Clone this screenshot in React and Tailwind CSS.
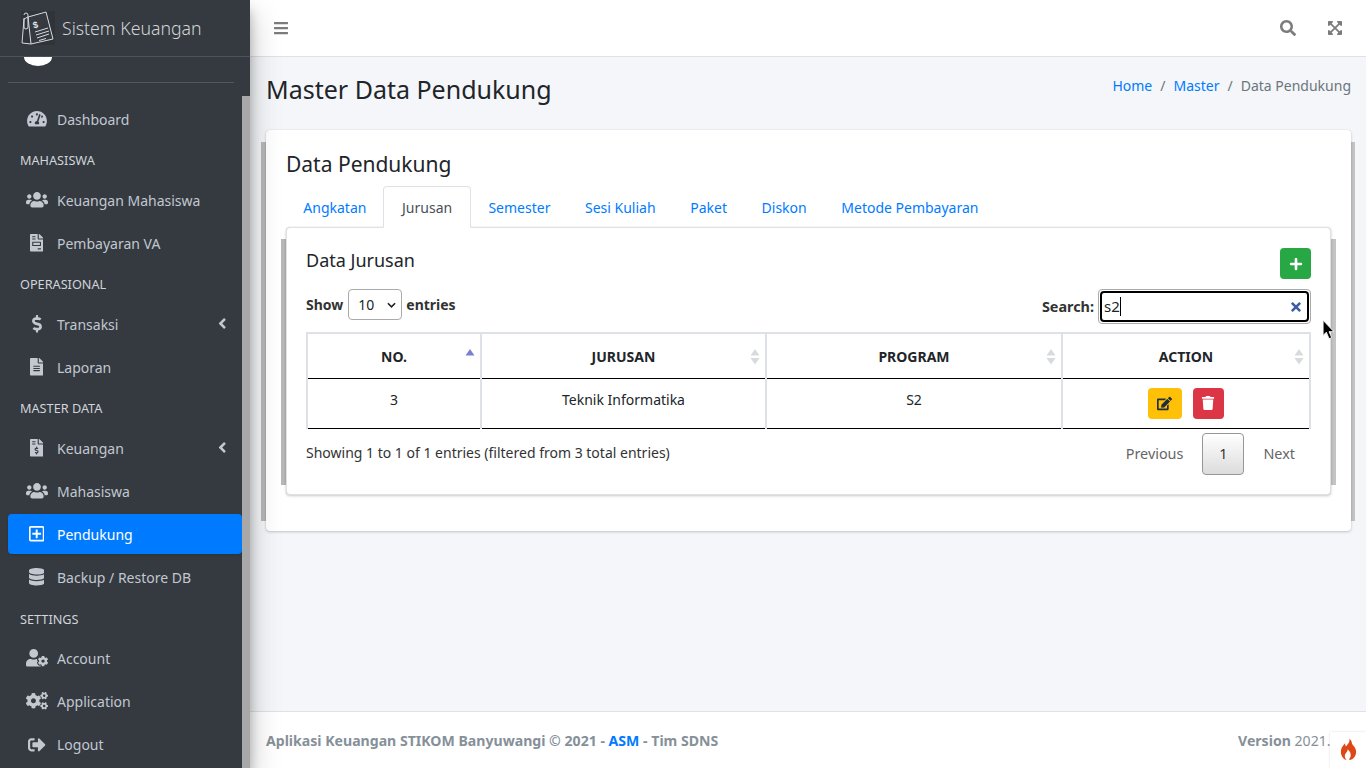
import { FaTachometerAlt, FaUsers, FaFileInvoice, FaDollarSign, FaFileAlt, FaFileInvoiceDollar, FaRegPlusSquare, FaDatabase, FaUserCog, FaCogs, FaSignOutAlt, FaBars, FaSearch, FaExpandArrowsAlt, FaAngleLeft, FaEdit, FaTrash, FaPlus, FaTimes } from 'react-icons/fa';

const font = { fontFamily: '"Noto Sans", sans-serif' };

const menu = [
  { icon: FaTachometerAlt, size: 'w-[20px]', label: 'Dashboard' },
  { header: 'MAHASISWA' },
  { icon: FaUsers, size: 'w-[22px]', label: 'Keuangan Mahasiswa' },
  { icon: FaFileInvoice, size: 'w-[13.2px]', label: 'Pembayaran VA' },
  { header: 'OPERASIONAL' },
  { icon: FaDollarSign, size: 'w-[10px]', label: 'Transaksi', arrow: true },
  { icon: FaFileAlt, size: 'w-[13.2px]', label: 'Laporan' },
  { header: 'MASTER DATA' },
  { icon: FaFileInvoiceDollar, size: 'w-[13.2px]', label: 'Keuangan', arrow: true },
  { icon: FaUsers, size: 'w-[22px]', label: 'Mahasiswa' },
  { icon: FaRegPlusSquare, size: 'w-[15.4px]', label: 'Pendukung', active: true },
  { icon: FaDatabase, size: 'w-[15.4px]', label: 'Backup / Restore DB' },
  { header: 'SETTINGS' },
  { icon: FaUserCog, size: 'w-[22px]', label: 'Account' },
  { icon: FaCogs, size: 'w-[22px]', label: 'Application' },
  { icon: FaSignOutAlt, size: 'w-[17.6px]', label: 'Logout' },
];

const tabs = ['Angkatan', 'Jurusan', 'Semester', 'Sesi Kuliah', 'Paket', 'Diskon', 'Metode Pembayaran'];

function Logo() {
  return (
    <svg viewBox="0 0 34 34" className="w-[34px] h-[34px] shrink-0" fill="none" stroke="#d8dadc" strokeWidth="1">
      <rect x="0" y="0" width="34" height="34" fill="#2f343a" stroke="none" />
      <path d="M7 6 L25 1 L32 28 L10 33 Z" fill="#343a40" />
      <path d="M7 6 L3 8 L1 32 L10 33" />
      <path d="M3 4 a2 2 0 0 1 4 0 L7 16 a2 2 0 0 1 -4 0 L3 7" />
      <path d="M14 21 L27 17 M15 24 L28 20 M16 27 L28 23 M18 29.5 L25 27.5" />
      <text x="12" y="17" fontSize="9" fontWeight="700" fill="#e5e7e9" stroke="none" transform="rotate(-14 14 14)" fontFamily="Liberation Sans, sans-serif">$</text>
    </svg>
  );
}

function SortArrows({ active }) {
  return (
    <svg viewBox="0 0 10 16" className="absolute right-[5px] top-[15px] w-[10px] h-[16px]">
      <path d="M5 0 L9.5 6.5 L0.5 6.5 Z" fill={active ? '#7a7fd4' : '#d8dbde'} />
      {!active && <path d="M5 15.5 L9.5 9 L0.5 9 Z" fill="#d8dbde" />}
    </svg>
  );
}

function Sidebar() {
  return (
    <aside className="relative w-[250px] shrink-0 h-full flex flex-col bg-[#343a40] shadow-[0_14px_28px_rgba(0,0,0,0.25),0_10px_10px_rgba(0,0,0,0.22)] z-10">
      <div className="h-[57px] shrink-0 border-b border-[#4b545c] flex items-center pl-[21px]">
        <Logo />
        <span className="ml-[7px] text-[17.7px] font-light text-[#d2d4d6]">Sistem Keuangan</span>
      </div>
      <div className="flex flex-1 min-h-0">
        <div className="w-[242px] overflow-hidden">
          <div className="h-[10px] pl-[24px]">
            <div className="w-[28px] h-[9px] bg-white rounded-b-[14px_9px]" />
          </div>
          <div className="h-px bg-[#4f5962] ml-[8px] mr-[8px] mt-[15px] w-[226px]" />
          <nav className="pl-[8px] mt-[16px]">
            {menu.map((m, i) =>
              m.header ? (
                <div key={i} className="h-[37.6px] pl-[12px] flex items-center text-[12.7px] text-[#d0d4db]">{m.header}</div>
              ) : (
                <div key={i} className={`h-[40px] mb-[3.2px] rounded flex items-center pl-[16px] text-[14px] ${m.active ? 'bg-[#007bff] text-white shadow' : 'text-[#c2c7d0]'}`}>
                  <span className="w-[25.6px] mr-[7.4px] flex justify-center"><m.icon className={`h-[17.6px] shrink-0 ${m.size}`} /></span>
                  <span className="flex-1 pt-[1px]">{m.label}</span>
                  {m.arrow && <FaAngleLeft className="mr-[16px] h-[17px] w-[8.5px] -mt-[1px]" />}
                </div>
              )
            )}
          </nav>
        </div>
        <div className="w-[8px] pt-[39px]">
          <div className="h-full bg-[#a8a8a8]" />
        </div>
      </div>
    </aside>
  );
}

function Topbar() {
  return (
    <header className="h-[57px] shrink-0 bg-white border-b border-[#dee2e6] flex items-center justify-between text-[#7c7c7c] pl-[24px] pr-[24px]">
      <FaBars className="h-4 w-[14px]" />
      <div className="flex items-center gap-[32px]">
        <FaSearch className="h-4 w-4" />
        <FaExpandArrowsAlt className="h-4 w-[14px]" />
      </div>
    </header>
  );
}

function JurusanTable() {
  const heads = [
    { label: 'NO.', w: 'w-[174px]', active: true },
    { label: 'JURUSAN', w: 'w-[285px]' },
    { label: 'PROGRAM', w: 'w-[296px]' },
    { label: 'ACTION', w: 'w-[248px]' },
  ];
  return (
    <table className="w-[1003px] ml-0 mt-[8px] table-fixed border-collapse text-[14px] text-[#212529]">
      <thead>
        <tr className="h-[45px] border-b border-black">
          {heads.map((h) => (
            <th key={h.label} className={`relative ${h.w} border-2 border-b-0 border-[#dee2e6] pt-[1px] font-bold text-center text-[14px]`}>
              {h.label}
              <SortArrows active={h.active} />
            </th>
          ))}
        </tr>
      </thead>
      <tbody>
        <tr className="h-[50px] border-b border-black">
          <td className="border-x-2 border-[#dee2e6] text-center pb-[7px]">3</td>
          <td className="border-x-2 border-[#dee2e6] text-center pb-[7px]">Teknik Informatika</td>
          <td className="border-x-2 border-[#dee2e6] text-center pb-[7px]">S2</td>
          <td className="border-x-2 border-[#dee2e6]">
            <div className="flex justify-center gap-[11px] pr-[1px]">
              <span className="w-[34px] h-[31px] rounded bg-[#ffc107] flex items-center justify-center text-[#1f2d3d] text-[15px]"><FaEdit /></span>
              <span className="w-[31px] h-[31px] rounded bg-[#dc3545] flex items-center justify-center text-white text-[14px]"><FaTrash /></span>
            </div>
          </td>
        </tr>
      </tbody>
    </table>
  );
}

function InnerCard() {
  return (
    <div className="relative">
      <div className="absolute -right-[5px] top-[12px] bottom-[10px] w-[5px] bg-[#c4c4c4]" />
      <div className="absolute -left-[5px] top-[12px] bottom-[10px] w-[5px] bg-[#b8b8b8]" />
      <div className="relative h-[268px] bg-white border border-[#dfe2e5] rounded shadow-[0_0_1px_rgba(0,0,0,0.13),0_1px_3px_rgba(0,0,0,0.2)] px-[19px] pt-[19px]">
        <div className="flex items-start justify-between">
          <span className="text-[18px] leading-[26px] text-[#212529]">Data Jurusan</span>
          <span className="w-[31px] h-[31px] rounded bg-[#28a745] flex items-center justify-center text-white text-[14px] mt-[1px]"><FaPlus /></span>
        </div>
        <div className="flex items-center justify-between text-[14px] font-bold text-[#333] mt-[10px]">
          <div className="flex items-center gap-[4px] -mt-[4px]">
            <span className="mr-[1px]">Show</span>
            <span className="w-[54px] h-[31px] border border-[#aaa] rounded flex items-center justify-between pl-[9px] pr-[5px] font-normal text-[#212529]">
              10
              <svg viewBox="0 0 10 6" className="w-[9px] h-[6px]" fill="none" stroke="#222" strokeWidth="1.8"><path d="M1 1 L5 5 L9 1" /></svg>
            </span>
            <span>entries</span>
          </div>
          <div className="flex items-center gap-[4px]">
            <span className="text-[14.4px]">Search:</span>
            <span className="w-[213px] h-[35px] border border-[#aaa] rounded flex items-center p-[1px]">
              <span className="w-full h-full border-2 border-black rounded flex items-center justify-between pl-[2px] pr-[4px] font-normal text-[#212529] text-[15px]">
                <span className="flex items-center">s2<span className="w-px h-[19px] bg-black" /></span>
                <FaTimes className="text-[#3a5fa5] text-[14px]" />
              </span>
            </span>
          </div>
        </div>
        <JurusanTable />
        <div className="flex items-start justify-between text-[14px] text-[#333] mt-[4px]">
          <span className="mt-[9px]">Showing 1 to 1 of 1 entries (filtered from 3 total entries)</span>
          <div className="flex items-center text-[#666] text-[14.4px]">
            <span className="px-[19px]">Previous</span>
            <span className="w-[42px] h-[42px] border border-[#979797] rounded flex items-center justify-center text-[#333] bg-gradient-to-b from-white to-[#dcdcdc]">1</span>
            <span className="pl-[19px] pr-[16px]">Next</span>
          </div>
        </div>
      </div>
    </div>
  );
}

function MainCard() {
  return (
    <div className="relative ml-[16px] mr-[15px] mt-[23px]">
      <div className="absolute -right-[4px] top-[12px] bottom-[10px] w-[4px] bg-[#c4c4c4]" />
      <div className="absolute -left-[5px] top-[12px] bottom-[10px] w-[5px] bg-[#b8b8b8]" />
      <div className="relative h-[401px] bg-white rounded shadow-[0_0_1px_rgba(0,0,0,0.13),0_1px_3px_rgba(0,0,0,0.2)] pl-[20px] pr-[20px] pt-[18px]">
        <h3 className="text-[21px] leading-[32px] text-[#212529]">Data Pendukung</h3>
        <div className="flex mt-[6px] text-[14px] h-[42px] relative z-10 text-[#007bff]">
          {tabs.map((t) =>
            t === 'Jurusan' ? (
              <span key={t} className="h-[42px] w-[88px] -ml-[0.6px] border border-[#dee2e6] border-b-white bg-white rounded-t text-[#495057] flex items-center justify-center">{t}</span>
            ) : (
              <span key={t} className="h-[42px] px-[17.3px] flex items-center">{t}</span>
            )
          )}
        </div>
        <div className="-mt-px">
          <InnerCard />
        </div>
      </div>
    </div>
  );
}

function Content() {
  return (
    <main className="flex-1 min-h-0 bg-[#f4f6f9] overflow-hidden">
      <div className="flex items-center justify-between pl-[16px] pr-[15px] pt-[13px]">
        <h1 className="text-[25px] leading-[36px] text-[#212529] mt-[1px]">Master Data Pendukung</h1>
        <div className="flex items-center text-[14px] -mt-[6px]">
          <span className="text-[#007bff]">Home</span>
          <span className="text-[#6c757d] px-[8px]">/</span>
          <span className="text-[#007bff]">Master</span>
          <span className="text-[#6c757d] px-[8px]">/</span>
          <span className="text-[#6c757d]">Data Pendukung</span>
        </div>
      </div>
      <MainCard />
    </main>
  );
}

function Footer() {
  return (
    <footer className="h-[57px] shrink-0 bg-white border-t border-[#dee2e6] flex items-center justify-between pl-[16px] pt-[2px] text-[14.1px] text-[#869099]">
      <span className="font-bold">Aplikasi Keuangan STIKOM Banyuwangi © 2021 - <span className="text-[#007bff]">ASM</span> - Tim SDNS</span>
      <span className="whitespace-nowrap w-[128px] shrink-0 overflow-hidden"><b>Version</b> 2021.1</span>
    </footer>
  );
}

export default function App() {
  return (
    <div className="relative flex h-screen w-full overflow-hidden" style={font}>
      <Sidebar />
      <div className="flex-1 min-w-0 flex flex-col">
        <Topbar />
        <Content />
        <Footer />
      </div>
      {/* debug bar tab */}
      <div className="absolute right-0 bottom-0 w-[36px] h-[36px] bg-white shadow-[0_0_2px_rgba(0,0,0,0.15)] flex items-center justify-center">
        <svg viewBox="0 0 20 26" className="w-[17px] h-[22px]">
          <path fill="#dd4814" d="M11 0 C12 4 9 6 7 9 C6 7 6 6 6 5 C3 8 1 11 1 15 C1 20 4 24 8 25 C6 23 5 21 6 18 C7 16 9 15 9 12 C11 14 14 17 12 22 C11 23 11 24 11 25 C16 24 19 20 19 15 C19 10 15 8 14 5 C14 3 13 1 11 0 Z" />
        </svg>
      </div>
      {/* mouse cursor */}
      <svg viewBox="0 0 12 19" className="absolute left-[1322px] top-[319px] w-[13px] h-[21px]">
        <path d="M1 1 L1 15 L4 12 L6.5 18 L9 17 L6.5 11.5 L11 11.5 Z" fill="#000" stroke="#fff" strokeWidth="0.8" />
      </svg>
    </div>
  );
}
